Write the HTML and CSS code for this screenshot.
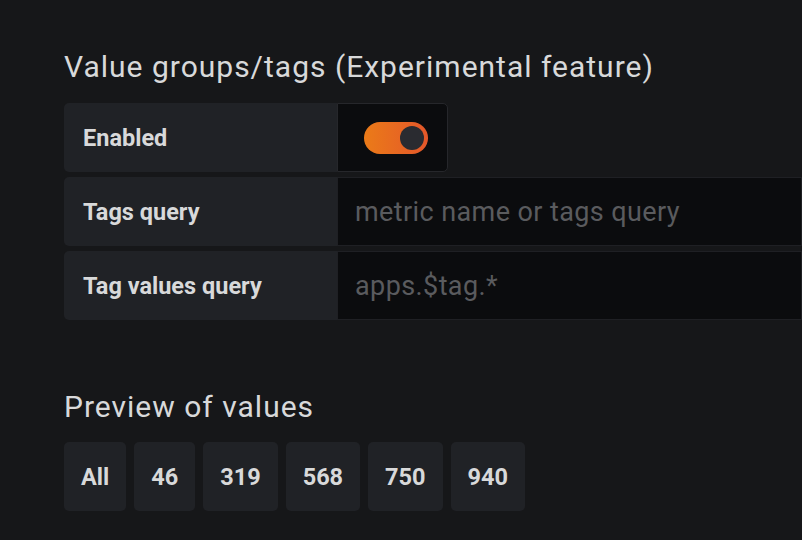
FILE: index.html
```html
<!DOCTYPE html>
<html>
<head>
<meta charset="utf-8">
<link rel="stylesheet" href="styles.css">
</head>
<body>
<div class="page">
  <h2 class="section-title">Value groups/tags (Experimental feature)</h2>
  <div class="form">
    <div class="form-row">
      <div class="form-label">Enabled</div>
      <div class="switch-box">
        <span class="switch"><span class="knob"></span></span>
      </div>
    </div>
    <div class="form-row">
      <div class="form-label">Tags query</div>
      <div class="form-input"><span class="placeholder">metric name or tags query</span></div>
    </div>
    <div class="form-row">
      <div class="form-label">Tag values query</div>
      <div class="form-input"><span class="placeholder">apps.$tag.*</span></div>
    </div>
  </div>
  <h2 class="section-title preview-title">Preview of values</h2>
  <div class="tags">
    <span class="tag">All</span>
    <span class="tag">46</span>
    <span class="tag">319</span>
    <span class="tag">568</span>
    <span class="tag">750</span>
    <span class="tag">940</span>
  </div>
</div>
</body>
</html>
```

FILE: styles.css
```css
html, body {
  margin: 0;
  padding: 0;
  background: #161719;
  overflow: hidden;
}
body {
  font-family: Roboto, "Liberation Sans", sans-serif;
  color: #d8d9da;
}
.page {
  padding: 51px 0 0 64px;
}
.section-title {
  margin: 0 0 20px 0;
  font-size: 30px;
  line-height: 32px;
  letter-spacing: 1px;
  font-weight: 400;
  color: #d8d9da;
}
.form {
  display: flex;
  flex-direction: column;
  gap: 5px;
}
.form-row {
  display: flex;
  height: 69px;
  width: 738px;
}
.form-label {
  width: 273px;
  box-sizing: border-box;
  padding-left: 19px;
  display: flex;
  align-items: center;
  background: #202226;
  border-radius: 5px 0 0 5px;
  font-size: 23.5px;
  font-weight: 700;
  color: #d8d9da;
}
.switch-box {
  width: 111px;
  box-sizing: border-box;
  background: #0b0c0e;
  border: 1px solid #26272b;
  border-radius: 0 5px 5px 0;
  display: flex;
  align-items: center;
  justify-content: flex-end;
  padding-right: 19px;
}
.switch {
  position: relative;
  width: 64px;
  height: 32px;
  border-radius: 16px;
  background: linear-gradient(90deg, #eb7b18, #e4572a);
}
.knob {
  position: absolute;
  right: 4px;
  top: 4px;
  width: 24px;
  height: 24px;
  border-radius: 50%;
  background: #2a2b30;
}
.form-input {
  flex: 1;
  box-sizing: border-box;
  background: #0b0c0e;
  border: 1px solid #1f2024;
  display: flex;
  align-items: center;
  padding-left: 17px;
}
.placeholder {
  font-size: 27px;
  letter-spacing: 0.4px;
  color: #5a5b5e;
}
.preview-title {
  margin-top: 71px;
  margin-bottom: 19px;
}
.tags {
  display: flex;
  gap: 8px;
}
.tag {
  height: 69px;
  padding: 0 17px;
  display: flex;
  align-items: center;
  background: #202226;
  border-radius: 5px;
  font-size: 23.5px;
  font-weight: 700;
  color: #d8d9da;
}
```
